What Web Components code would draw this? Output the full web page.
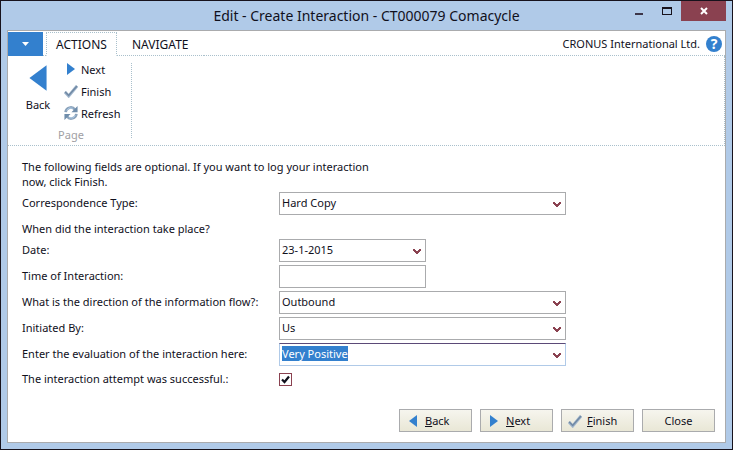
<!DOCTYPE html>
<html lang="en">
<head>
<meta charset="utf-8">
<title>Edit - Create Interaction</title>
<style>
  html, body { height: 100%; }
  body { margin: 0; font: 11px/15px "Noto Sans", "Open Sans", sans-serif; color: #10101c;
    --frame: #b0cae8; --line: #aaabad; --blue: #3380ce; --wine: #8a4150; --dots: #a9c0cc; }
</style>
</head>
<body>
<app-window heading="Edit - Create Interaction - CT000079 Comacycle">
  <ribbon-tabs company="CRONUS International Ltd."></ribbon-tabs>
  <ribbon-panel>
    <ribbon-group label="Page">
      <ribbon-command slot="large" large icon="back">Back</ribbon-command>
      <ribbon-command icon="next">Next</ribbon-command>
      <ribbon-command icon="check">Finish</ribbon-command>
      <ribbon-command icon="refresh">Refresh</ribbon-command>
    </ribbon-group>
  </ribbon-panel>
  <wizard-form>
    <form-note>The following fields are optional. If you want to log your interaction now, click Finish.</form-note>
    <form-field label="Correspondence Type:" kind="select" value="Hard Copy"></form-field>
    <form-note compact>When did the interaction take place?</form-note>
    <form-field label="Date:" kind="combo" value="23-1-2015" short></form-field>
    <form-field label="Time of Interaction:" kind="text" short></form-field>
    <form-field label="What is the direction of the information flow?:" kind="select" value="Outbound"></form-field>
    <form-field label="Initiated By:" kind="select" value="Us"></form-field>
    <form-field label="Enter the evaluation of the interaction here:" kind="combo" value="Very Positive" active></form-field>
    <form-field label="The interaction attempt was successful.:" kind="check"></form-field>
  </wizard-form>
  <button-bar slot="footer">
    <wizard-button icon="back"><u>B</u>ack</wizard-button>
    <wizard-button icon="next"><u>N</u>ext</wizard-button>
    <wizard-button icon="check"><u>F</u>inish</wizard-button>
    <wizard-button>Close</wizard-button>
  </button-bar>
</app-window>
<script>
const icons = {
  back: '<svg class="i" viewBox="0 0 14 14" aria-hidden="true"><path d="M11 1v12L3 7z" fill="#3380ce"/></svg>',
  next: '<svg class="i" viewBox="0 0 14 14" aria-hidden="true"><path d="M3 1v12l8-6z" fill="#3380ce"/></svg>',
  check: '<svg class="i" viewBox="0 0 14 14" aria-hidden="true"><path d="M1 8 4.700 12 13 2" fill="none" stroke="#a3b8ce" stroke-width="3"/><path d="M1 7.700 4.700 11.500 13 2" fill="none" stroke="#7089a4" stroke-width="1.500"/></svg>',
  refresh: '<svg class="i" viewBox="0 0 16 16" aria-hidden="true"><g fill="none" stroke="#8ba3bb" stroke-width="3"><path d="M1.800 7A6 6 0 0 1 12.500 4"/><path d="M14.200 9A6 6 0 0 1 3.500 12"/></g><path d="M15.500 0v7H8.500zM.5 16V9h7z" fill="#6f8dab"/><path d="M3 5A6 6 0 0 1 10 2.500M13 11A6 6 0 0 1 6 13.500" fill="none" stroke="#b5d2f0"/></svg>',
  chevron: '<svg class="c" viewBox="0 0 8 6" aria-hidden="true"><path d="M0 0h2v1h1v1h2V1h1V0h2v2H7v1H6v1H5v1H3V4H2V3H1V2H0z" fill="#8a4150"/></svg>'
};
const define = (name, css, html, after) => customElements.define(name, class extends HTMLElement {
  constructor() { super(); this.attachShadow({ mode: 'open' }); }
  connectedCallback() {
    this.shadowRoot.innerHTML = '<style>*{box-sizing:border-box}button,input,select{font:inherit;color:inherit;margin:0}' + css + '</style>' + html(this);
    if (after) after(this, this.shadowRoot);
  }
});

define('app-window', `
  :host { display: flex; flex-direction: column; box-sizing: border-box; min-height: 100%; background: var(--frame); border: 1px solid #17121c; padding: 0 6px 6px; }
  header { display: grid; grid-template-columns: 1fr auto 1fr; height: 29px; }
  h1 { grid-column: 2; margin: 0; font-size: 14px; font-weight: 400; line-height: 29px; white-space: nowrap; }
  nav { display: flex; justify-content: flex-end; align-items: flex-start; }
  button { display: grid; place-items: center; width: 28px; height: 20px; padding: 0; border: 0; background: none; }
  button.close { width: 45px; background: var(--wine); }
  main { flex: 1; display: flex; flex-direction: column; background: #fff; border: 1px solid var(--line); }
  .space { flex: 1; }
`, el => `<header><h1>${el.getAttribute('heading')}</h1><nav>
  <button aria-label="Minimize"><svg width="10" height="10"><path d="M1 7h8v2H1z" fill="#3c3548"/></svg></button>
  <button aria-label="Maximize"><svg width="10" height="8"><path d="M0 0h10v8H0zM1 2v5h8V2z" fill="#17121c" fill-rule="evenodd"/></svg></button>
  <button class="close" aria-label="Close window"><svg width="8" height="8"><path d="M1 1l6 6M7 1 1 7" stroke="#fff" stroke-width="2"/></svg></button>
  </nav></header><main><slot></slot><div class="space"></div><slot name="footer"></slot></main>`);

define('ribbon-tabs', `
  :host { display: flex; height: 25px; padding-top: 1px; box-sizing: border-box; font-size: 12px; }
  .menu { width: 35px; border: 0; padding: 0; background: var(--blue); display: grid; place-items: center; }
  i { border-bottom: 1px dotted var(--dots); }
  i.gap { width: 3px; }
  .tab { border: 0; background: none; padding: 1px 10px 0; border-bottom: 1px dotted var(--dots); }
  .tab[aria-selected=true] { width: 71px; padding: 0; border: 1px dotted var(--dots); border-bottom-color: transparent; }
  .tab[aria-selected=false] { padding: 1px 15px 0; }
  .company { flex: 1; display: flex; align-items: center; justify-content: flex-end; gap: 6px; padding-right: 3px; border-bottom: 1px dotted var(--dots); font-size: 11px; }
  .help { width: 16px; height: 16px; padding: 0; border: 0; border-radius: 50%; background: var(--blue); color: #fff; font-weight: 700; font-size: 14px; line-height: 16px; }
`, el => `<button class="menu" aria-label="Application menu"><svg width="7" height="4"><path d="M0 0h7L3.500 4z" fill="#fff"/></svg></button><i class="gap"></i>
  <button class="tab" role="tab" aria-selected="true">ACTIONS</button><button class="tab" role="tab" aria-selected="false">NAVIGATE</button>
  <div class="company"><span>${el.getAttribute('company')}</span><button class="help" aria-label="Help">?</button></div>`);

define('ribbon-panel', `
  :host { display: flex; padding: 7px 0; border: 1px dotted var(--dots); border-top: 0; border-left: 0; }
`, () => '<slot></slot>');

define('ribbon-group', `
  :host { display: grid; grid-template-columns: 44px 79px; grid-template-rows: 64px 11px; border-right: 1px dotted var(--dots); height: 75px; }
  .small { display: flex; flex-direction: column; padding-left: 12px; margin-top: -5px; }
  .name { grid-column: 1 / 3; text-align: center; color: #a0a0a4; line-height: 15px; font-size: 11px; padding-left: 3px; }
`, el => `<slot name="large"></slot><div class="small"><slot></slot></div><div class="name">${el.getAttribute('label')}</div>`);

define('ribbon-command', `
  :host { display: block; }
  button { display: flex; align-items: center; gap: 3px; width: 100%; height: 22px; padding: 0; border: 0; background: none; }
  .i { width: 14px; height: 14px; flex: none; }
  :host([large]) button { flex-direction: column; height: auto; gap: 4px; padding-left: 16px; }
  :host([large]) .i { width: 30px; height: 30px; }
`, el => `<button>${icons[el.getAttribute('icon')]}<slot></slot></button>`);

define('wizard-form', `
  :host { display: flex; flex-direction: column; gap: 3px; padding: 13px 0 8px 14px; }
`, () => '<slot></slot>');

define('form-note', `
  :host { display: block; max-width: 370px; }
  :host([compact]) { padding-top: 3px; }
  p { margin: 0; }
`, () => '<p><slot></slot></p>');

define('form-field', `
  :host { display: grid; grid-template-columns: 257fr 287fr 159fr; align-items: center; }
  label { padding-bottom: 2px; white-space: nowrap; }
  .box { display: grid; align-items: center; height: 23px; border: 1px solid var(--line); background: #fff; }
  :host([short]) .box { max-width: 147px; }
  :host([active]) .box { border-color: var(--frame); border-top: 1px solid #5b4a78; }
  select, input.t { grid-area: 1 / 1; width: 100%; height: 21px; padding: 0 20px 2px 2px; border: 0; outline: 0; background: none; appearance: none; min-width: 0; }
  input.t::selection { background: var(--blue); color: #fff; }
  .c { grid-area: 1 / 1; justify-self: end; width: 8px; height: 6px; margin-right: 4px; margin-top: 2px; pointer-events: none; }
  input.k { appearance: none; width: 13px; height: 13px; border: 1px solid var(--wine); display: grid; place-items: center; grid-area: 1 / 1; }
  .tick { display: grid; width: 13px; height: 20px; align-items: center; }
  .tick svg { grid-area: 1 / 1; pointer-events: none; justify-self: center; }
`, el => {
  const v = el.getAttribute('value') || '', kind = el.getAttribute('kind');
  const control = {
    select: `<div class="box"><select id="f"><option>${v}</option></select>${icons.chevron}</div>`,
    combo: `<div class="box"><input class="t" id="f" role="combobox" aria-expanded="false" spellcheck="false" value="${v}">${icons.chevron}</div>`,
    text: `<div class="box"><input class="t" id="f" type="text"></div>`,
    check: `<div class="tick"><input class="k" id="f" type="checkbox" checked><svg width="9" height="9" viewBox="0 0 9 9" aria-hidden="true"><path d="M1 4.500 3.500 7 8 1.500" fill="none" stroke="#10101c" stroke-width="2.200"/></svg></div>`
  }[kind];
  return `<label for="f">${el.getAttribute('label')}</label>${control}`;
}, (el, root) => {
  if (el.hasAttribute('active')) { const f = root.getElementById('f'); f.focus(); f.select(); }
});

define('button-bar', `
  :host { display: flex; justify-content: flex-end; gap: 8px; padding: 0 10px 10px; }
`, () => '<slot></slot>');

define('wizard-button', `
  :host { display: block; }
  button { display: flex; align-items: center; justify-content: center; gap: 5px; width: 73px; height: 23px; padding: 0; border: 1px solid var(--line); background: linear-gradient(#f6f5ee, #e9e7d6); }
  :host([icon]) button { justify-content: flex-start; padding-left: 6px; }
  .i { width: 14px; height: 14px; flex: none; }
`, el => `<button>${icons[el.getAttribute('icon')] || ''}<span><slot></slot></span></button>`);
</script>
</body>
</html>
